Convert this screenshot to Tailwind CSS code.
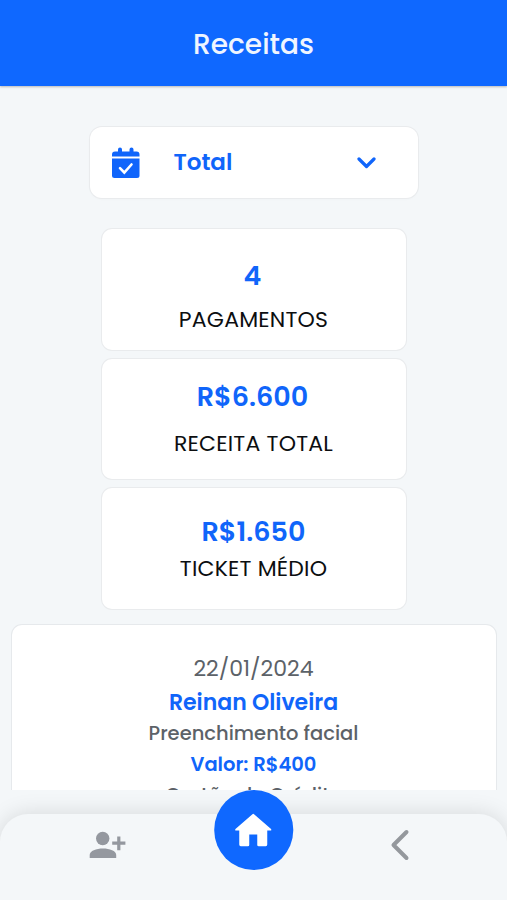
<!DOCTYPE html>
<html lang="pt-BR">
<head>
<meta charset="utf-8">
<meta name="viewport" content="width=device-width, initial-scale=1">
<title>Receitas</title>
<script src="https://cdn.jsdelivr.net/npm/@tailwindcss/browser@4"></script>
</head>
<body class="bg-[#f4f7f9] font-['Poppins','Inter',sans-serif] text-[#1065fa]">
<div class="flex h-[900px] w-full flex-col overflow-hidden text-center whitespace-nowrap">
  <header class="z-10 flex h-[86px] shrink-0 items-center justify-center bg-[#0f68ff] pt-[4px] text-[28px] leading-[30px] font-medium text-[#eff5ff] shadow-[0_1px_2px_rgba(0,0,0,0.25)]"><h1>Receitas</h1></header>

  <main class="flex min-h-0 flex-1 flex-col items-center overflow-hidden pt-[41px]">
    <button class="flex h-[71px] w-[328px] shrink-0 items-center rounded-xl bg-white pl-[22px] text-left shadow-[0_0_0_1px_#e9ebed,0_1px_3px_rgba(0,0,0,0.03)]">
      <svg class="mt-px h-8 w-7" viewBox="0 0 28 32" fill="#1065fb">
        <path d="M0 9.500V7.500Q0 4.500 3 4.500H6V2.500a2 2 0 0 1 4 0V4.500H17.500V2.500a2 2 0 0 1 4 0V4.500H24.500Q27.500 4.500 27.500 7.500V9.500Z"/>
        <path d="M0 11.500H27.500V28.500Q27.500 31 25 31H2.500Q0 31 0 28.500Z"/>
        <path d="m8 21.200 4.300 4.300 7.200-8" fill="none" stroke="#fff" stroke-width="2.600" stroke-linecap="round"/>
      </svg>
      <span class="mb-[2px] ml-[34px] w-[183px] text-[23px] leading-8 font-semibold">Total</span>
      <svg class="mt-px h-3 w-5" viewBox="0 0 20 12" fill="none" stroke="#1065fb" stroke-width="3.200" stroke-linecap="round" stroke-linejoin="round"><path d="m2 2 7.500 7.500L17 2"/></svg>
    </button>

    <section class="mt-[31px] flex shrink-0 flex-col gap-[9px]">
      <div class="h-[120.500px] w-[304px] rounded-[10px] bg-white pt-[31px] shadow-[0_0_0_1px_#e9ebed]">
        <p class="-translate-x-px text-[27px] leading-8 font-semibold">4</p>
        <p class="mt-3 text-[22px] leading-8 tracking-[0.2px] text-[#0c0e10]">PAGAMENTOS</p>
      </div>
      <div class="h-[120.500px] w-[304px] rounded-[10px] bg-white pt-[22px] shadow-[0_0_0_1px_#e9ebed]">
        <p class="-translate-x-px text-[27px] leading-8 font-semibold">R$6.600</p>
        <p class="mt-[15px] text-[22px] leading-8 tracking-[0.2px] text-[#0c0e10]">RECEITA TOTAL</p>
      </div>
      <div class="h-[120.500px] w-[304px] rounded-[10px] bg-white pt-[28px] shadow-[0_0_0_1px_#e9ebed]">
        <p class="text-[27px] leading-8 font-semibold">R$1.650</p>
        <p class="mt-[5px] text-[22px] leading-8 tracking-[0.2px] text-[#0c0e10]">TICKET MÉDIO</p>
      </div>
    </section>

    <article class="mt-[16.500px] h-[240px] w-[484px] shrink-0 rounded-[10px] bg-white pt-[27.500px] text-[#5c6268] shadow-[0_0_0_1px_#e6e9ec]">
      <p class="text-[22px] leading-8">22/01/2024</p>
      <p class="mt-[2px] text-[22px] leading-8 font-semibold text-[#1065fa]">Reinan Oliveira</p>
      <p class="-mt-px text-[19.500px] leading-8 font-medium">Preenchimento facial</p>
      <p class="-mt-px text-[19.500px] leading-8 font-semibold text-[#1065fa]">Valor: R$400</p>
      <p class="-mt-px text-[19.500px] leading-8 font-medium">Cartão de Crédito</p>
    </article>
  </main>

  <footer class="relative h-[110px] shrink-0 bg-[#f4f7f9] pt-6">
    <div class="absolute inset-0 overflow-hidden"><div class="mt-6 h-[120px] rounded-t-[28px] bg-[#f4f7f9] shadow-[0_0_22px_rgba(0,0,0,0.13)]"></div></div>
    <nav class="relative flex h-[62px] items-center justify-between pr-[97px] pl-[89px]">
      <svg class="h-7 w-[37px]" viewBox="0 0 37 28" fill="#94989f"><circle cx="13.700" cy="7.500" r="6.700"/><path d="M.7 27v-3C.7 15.200 27.200 15.200 27.200 24V27Z"/><path d="M28.200 5.500h3.200v5h5v3.200h-5v5.500h-3.200v-5.500h-5v-3.200h5Z"/></svg>
      <svg class="h-8 w-5" viewBox="0 0 20 32" fill="none" stroke="#94989d" stroke-width="4" stroke-linecap="round" stroke-linejoin="round"><path d="M16.500 3 3.500 16l13 13"/></svg>
    </nav>
    <button class="absolute top-0 left-1/2 flex size-[79.500px] -translate-x-1/2 items-center justify-center rounded-full bg-[#0f68ff]">
      <svg class="h-[34px] w-[38px]" viewBox="0 0 38 34" fill="#fff"><path d="M18.200 1.200Q19 .4 19.800 1.200L36.800 16Q37.500 17.500 36.300 17.500H33V31.500Q33 33.300 31.500 33.300H24.500Q23 33.300 23 32V21.500H15V32Q15 33.300 13.500 33.300H6.500Q5 33.300 5 31.500V17.500H1.700Q.5 17.500 1.200 16Z"/></svg>
    </button>
  </footer>
</div>
</body>
</html>
